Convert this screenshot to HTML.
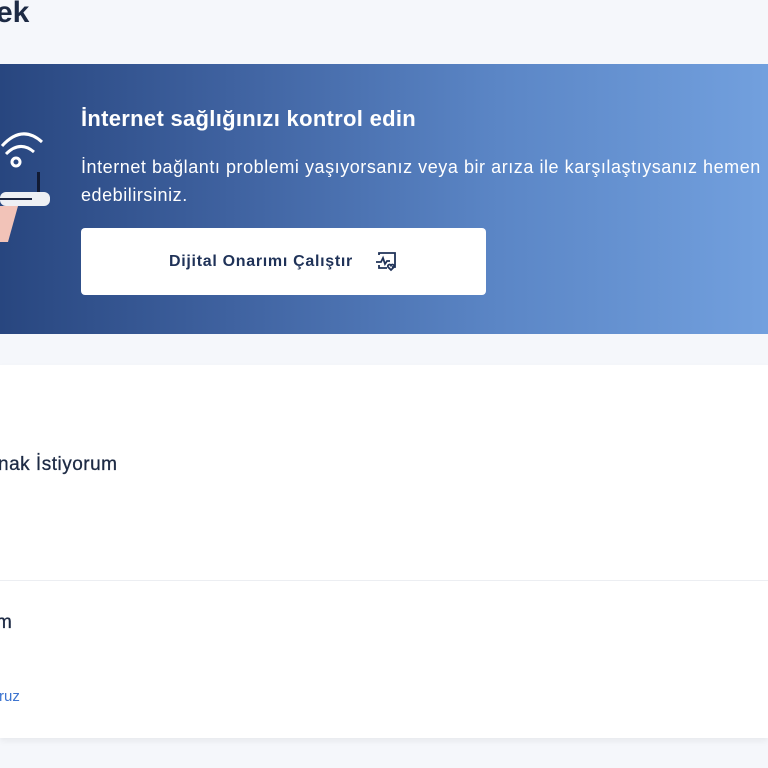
<!DOCTYPE html>
<html><head><meta charset="utf-8"><style>
*{margin:0;padding:0;box-sizing:border-box}
body{width:768px;height:768px;overflow:hidden;background:#f5f7fb;font-family:"Liberation Sans",sans-serif;position:relative}
.t{position:absolute;white-space:nowrap}
.banner{position:absolute;left:0;top:64px;width:768px;height:270px;background:linear-gradient(90deg,#28467f 0%,#3f62a0 30%,#5b86c6 65%,#72a0de 100%)}
.btn{position:absolute;left:81px;top:228px;width:405px;height:67px;background:#fff;border-radius:4px}
.card{position:absolute;left:0;top:365px;width:768px;height:373px;background:#fff;box-shadow:0 3px 6px rgba(0,0,0,.06)}
</style></head><body>
<div class="t" style="left:-4px;top:-4px;font-size:30px;font-weight:bold;color:#1d2a44">ek</div>
<div class="banner"></div>
<svg style="position:absolute;left:0;top:120px" width="60" height="130" viewBox="0 0 60 130">
<path d="M2 26 Q22 4 42 22" stroke="#fff" stroke-width="3" fill="none"/>
<path d="M6 34 Q20 20 34 32" stroke="#fff" stroke-width="3" fill="none"/>
<circle cx="16" cy="42" r="4" stroke="#fff" stroke-width="3" fill="none"/>
<rect x="37" y="52" width="3" height="22" fill="#111a33"/>
<rect x="0" y="72" width="50" height="14" rx="6" fill="#eef0f4"/>
<line x1="0" y1="79" x2="32" y2="79" stroke="#1b2540" stroke-width="2"/>
<path d="M0 86 L18 86 L8 122 L0 122 Z" fill="#f2c3b8"/>
</svg>
<div class="t" style="left:81px;top:106px;font-size:22px;font-weight:bold;color:#fff;letter-spacing:0.3px">İnternet sağlığınızı kontrol edin</div>
<div class="t" style="left:81px;top:153px;font-size:18px;color:#fff;line-height:28px;letter-spacing:0.55px">İnternet bağlantı problemi yaşıyorsanız veya bir arıza ile karşılaştıysanız hemen<br>edebilirsiniz.</div>
<div class="btn"></div>
<div class="t" style="left:169px;top:253px;font-size:16px;font-weight:bold;color:#1f3258;letter-spacing:0.7px">Dijital Onarımı Çalıştır</div>
<svg style="position:absolute;left:374px;top:251px" width="24" height="22" viewBox="0 0 24 22" fill="none" stroke="#1f3258" stroke-width="1.8">
<path d="M5 4V2h16v14h-3M5 14v3h8"/><path d="M2 11h5l2-4 2 6 2-3h3"/><path d="M17 19l-3-3a1.6 1.6 0 0 1 3-1.5a1.6 1.6 0 0 1 3 1.5z"/>
</svg>
<div class="card"></div>
<div style="position:absolute;left:0;top:580px;width:768px;height:1px;background:#eceef2"></div>
<div class="t" style="left:-2px;top:454px;font-size:19px;color:#1d2a44;letter-spacing:0.5px;-webkit-text-stroke:0.3px #1d2a44">nak İstiyorum</div>
<div class="t" style="left:-4px;top:612px;font-size:19px;color:#1d2a44;-webkit-text-stroke:0.3px #1d2a44">m</div>
<div class="t" style="left:-1px;top:688px;font-size:15px;color:#3e75d0">ruz</div>
</body></html>
